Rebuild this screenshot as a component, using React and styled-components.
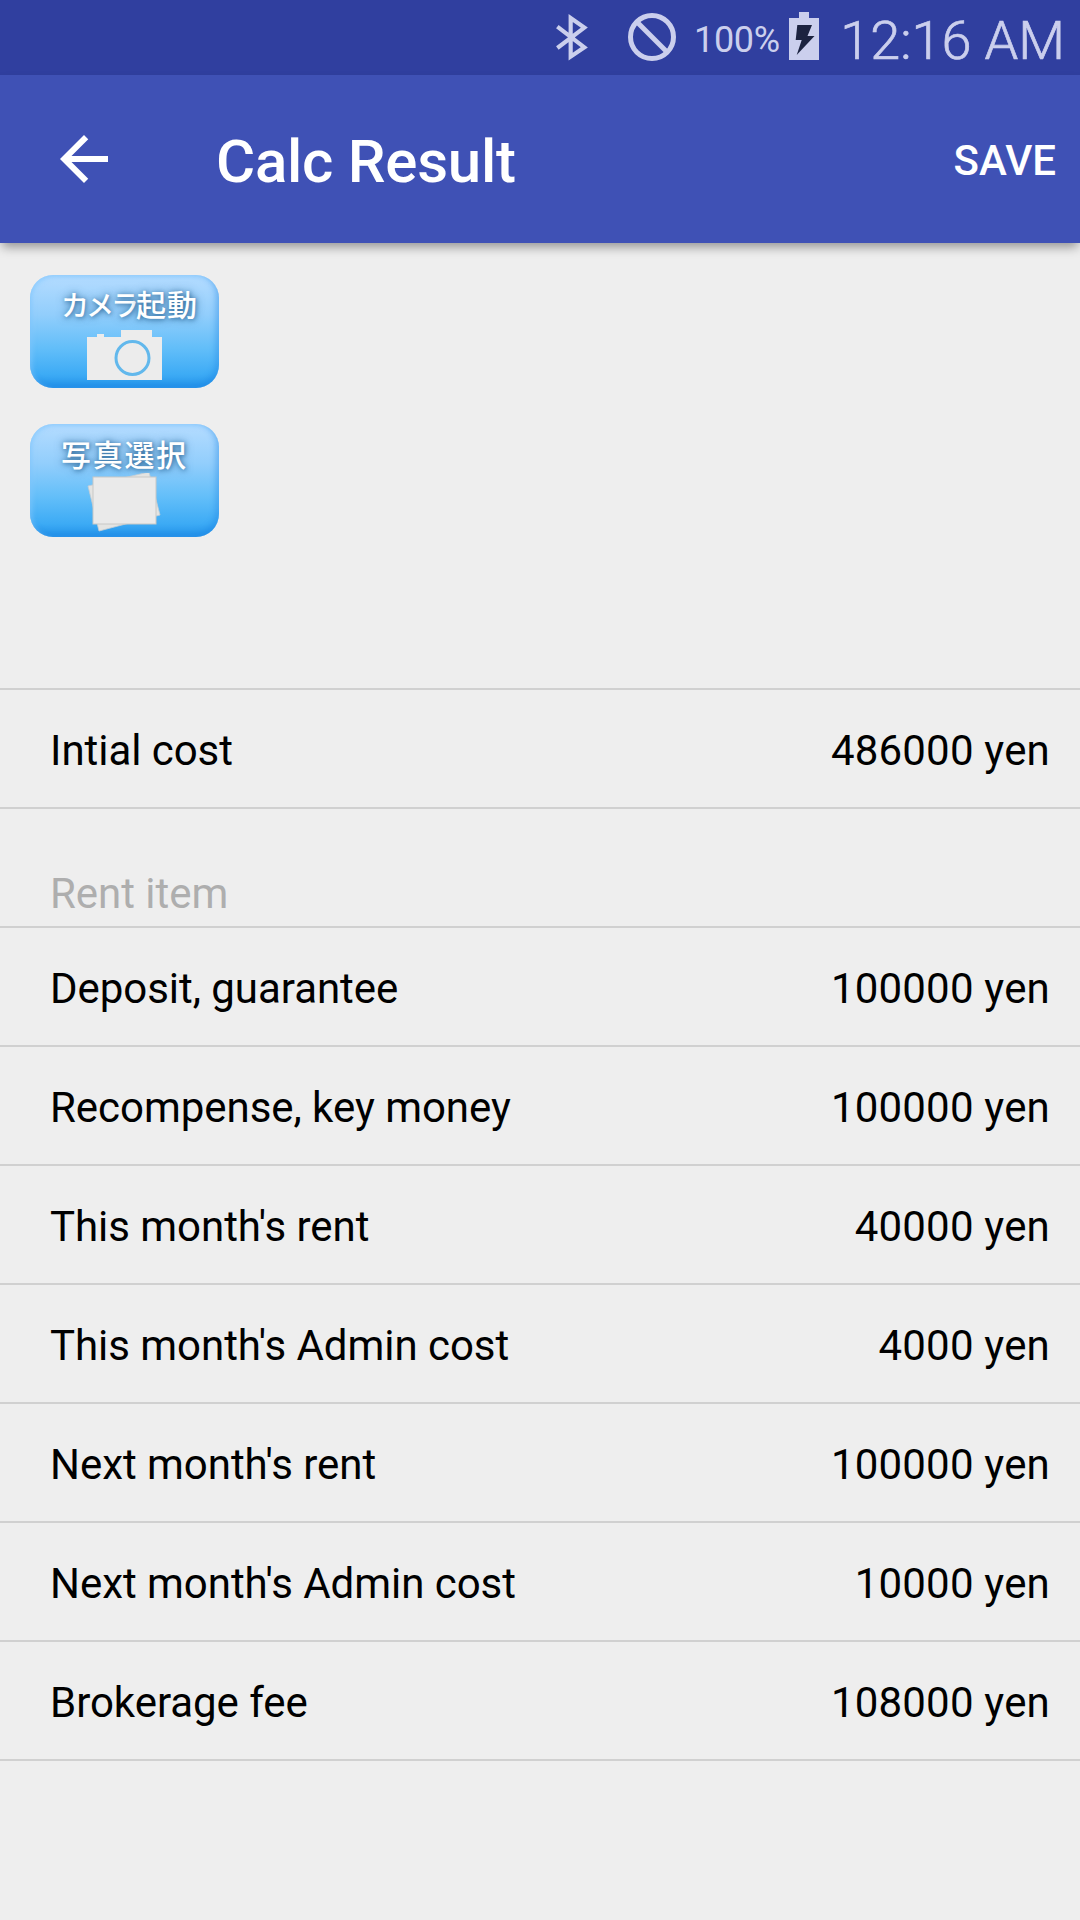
import React from 'react';
import styled, { createGlobalStyle } from 'styled-components';

const GlobalStyle = createGlobalStyle`
  * {
    box-sizing: border-box;
  }

  body {
    margin: 0;
    background: #eeeeee;
    font-family: Roboto, 'Noto Sans CJK JP', sans-serif;
  }
`;

const Screen = styled.div`
  width: 1080px;
  height: 1920px;
  overflow: hidden;
  background: #eeeeee;
`;

const StatusBar = styled.div`
  display: flex;
  align-items: flex-start;
  justify-content: flex-end;
  height: 75px;
  padding-right: 15px;
  background: #303f9f;
  color: #cbcfed;

  svg {
    display: block;
    flex: none;
  }
`;

const BluetoothIcon = styled.svg`
  width: 32px;
  height: 49px;
  margin: 13px 40px 0 0;
`;

const BlockIcon = styled.svg`
  width: 48px;
  height: 48px;
  margin: 13px 18px 0 0;
`;

const BatteryIcon = styled.svg`
  width: 30px;
  height: 48px;
  margin-top: 12px;
`;

const BatteryLevel = styled.span`
  width: 95px;
  padding-top: 19px;
  font-size: 36px;
  line-height: 42px;
  letter-spacing: -0.3px;
  white-space: nowrap;
`;

const Clock = styled.span`
  width: 246px;
  padding-top: 9px;
  font-size: 54px;
  font-weight: 300;
  line-height: 64px;
  text-align: right;
  white-space: nowrap;
  -webkit-text-stroke: 0.7px currentColor;
`;

const Toolbar = styled.header`
  position: relative;
  display: flex;
  align-items: center;
  height: 168px;
  padding: 0 24px 0 48px;
  background: #3f51b5;
  color: #ffffff;
  box-shadow: 0 6px 10px -2px rgba(0, 0, 0, 0.38);
`;

const BackButton = styled.button`
  width: 72px;
  height: 72px;
  margin-right: 96px;
  padding: 0;
  border: none;
  background: none;
  color: inherit;

  svg {
    display: block;
  }
`;

const Title = styled.h1`
  flex: 1;
  margin: 5px 0 0;
  font-size: 60px;
  font-weight: 500;
  letter-spacing: -0.25px;
  line-height: 70px;
`;

const SaveButton = styled.button`
  padding: 3px 0 0;
  border: none;
  background: none;
  color: inherit;
  font-family: inherit;
  font-size: 42px;
  font-weight: 500;
  line-height: 50px;
`;

const PhotoArea = styled.div`
  display: flex;
  flex-direction: column;
  gap: 36px;
  height: 445px;
  padding: 32px 30px;
`;

const PhotoButton = styled.button`
  display: flex;
  flex-direction: column;
  width: 189px;
  height: 113px;
  padding: 11px 0 0 31px;
  border: none;
  border-radius: 23px;
  background: linear-gradient(#b5dcff 0%, #92cefc 35%, #62bef9 65%, #3dabf5 88%, #2494ea 100%);
  box-shadow: inset -3px -3px 6px rgba(20, 125, 225, 0.4), inset 2px 2px 5px rgba(140, 205, 255, 0.7);
`;

const PhotoLabel = styled.span`
  height: 38px;
  color: #ffffff;
  font-family: 'Noto Sans CJK JP', sans-serif;
  font-size: 30px;
  font-weight: 500;
  letter-spacing: 1.7px;
  line-height: 36px;
  text-align: left;
  text-shadow: 0 0 8px rgba(30, 90, 140, 0.8), 1px 1px 4px rgba(30, 90, 140, 0.6);
  white-space: nowrap;
`;

const CameraLabel = styled(PhotoLabel)`
  margin-top: -2px;
  height: 40px;
  line-height: 38px;
  letter-spacing: 1px;
`;

const Kana = styled.span`
  font-size: 28px;
  letter-spacing: -3px;
`;

const PhotoIcon = styled.svg`
  width: 82px;
  height: 62px;
  margin-left: 22px;
`;

const List = styled.div`
  border-top: 2px solid #d0d0d0;
`;

const Row = styled.div`
  display: flex;
  justify-content: space-between;
  height: 119px;
  padding: 36px 30px 0 50px;
  border-bottom: 2px solid #d0d0d0;
  color: #000000;
  font-size: 42px;
  letter-spacing: -0.04px;
  line-height: 50px;
`;

const SectionHeader = styled(Row)`
  padding-top: 60px;
  color: #aeaeae;
`;

const Amount = styled.span`
  letter-spacing: 0.2px;
`;

const rentItems = [
  { label: 'Deposit, guarantee', amount: 100000 },
  { label: 'Recompense, key money', amount: 100000 },
  { label: "This month's rent", amount: 40000 },
  { label: "This month's Admin cost", amount: 4000 },
  { label: "Next month's rent", amount: 100000 },
  { label: "Next month's Admin cost", amount: 10000 },
  { label: 'Brokerage fee', amount: 108000 },
];

const CostRow = ({ label, amount }) => (
  <Row>
    <span>{label}</span>
    <Amount>{amount} yen</Amount>
  </Row>
);

const App = () => {
  return (
    <Screen>
      <GlobalStyle />
      <StatusBar>
        <BluetoothIcon viewBox="0 0 96 147" fill="none" stroke="currentColor" strokeWidth="12.5">
          <path d="M4 41 L85 103 L44 131 V15 L85 44 L4 105" />
        </BluetoothIcon>
        <BlockIcon viewBox="0 0 48 48" fill="none" stroke="currentColor" strokeWidth="5">
          <circle cx="24" cy="24" r="21.5" />
          <path d="M9 9 L39 39" />
        </BlockIcon>
        <BatteryLevel>100%</BatteryLevel>
        <BatteryIcon viewBox="0 0 30 48">
          <path d="M10 0 H20 V6 H30 V48 H0 V6 H10 Z" fill="currentColor" />
          <path d="M8.3 13 H23 L18.5 24 H25.5 L7.7 43 L12.7 28 H6.7 Z" fill="#1c2340" />
        </BatteryIcon>
        <Clock>12:16 AM</Clock>
      </StatusBar>

      <Toolbar>
        <BackButton aria-label="Back">
          <svg width="72" height="72" viewBox="0 0 24 24" fill="currentColor">
            <path d="M20 11H7.83l5.59-5.59L12 4l-8 8 8 8 1.41-1.41L7.83 13H20v-2z" />
          </svg>
        </BackButton>
        <Title>Calc Result</Title>
        <SaveButton>SAVE</SaveButton>
      </Toolbar>

      <PhotoArea>
        <PhotoButton>
          <CameraLabel>
            <Kana>カメラ</Kana>起動
          </CameraLabel>
          <PhotoIcon viewBox="0 0 82 62">
            <path d="M4 13 H14 V10 H21 V13 H38 V6 H69 V13 H79 V56 H4 Z" fill="#ececec" />
            <circle cx="49.5" cy="34" r="16.5" fill="none" stroke="#62b8ec" strokeWidth="3" />
          </PhotoIcon>
        </PhotoButton>
        <PhotoButton>
          <PhotoLabel>写真選択</PhotoLabel>
          <PhotoIcon viewBox="0 0 82 62">
            <path d="M5 13 L66 -1 L77 42 L16 58 Z" fill="#e4e4e2" stroke="#c4cdd3" strokeWidth="0.8" />
            <rect x="10" y="4" width="63" height="47" fill="#eaeaea" stroke="#c8c8c6" strokeWidth="1" />
          </PhotoIcon>
        </PhotoButton>
      </PhotoArea>

      <List>
        <CostRow label="Intial cost" amount={486000} />
        <SectionHeader>Rent item</SectionHeader>
        {rentItems.map((item) => (
          <CostRow key={item.label} label={item.label} amount={item.amount} />
        ))}
      </List>
    </Screen>
  );
};

export default App;
